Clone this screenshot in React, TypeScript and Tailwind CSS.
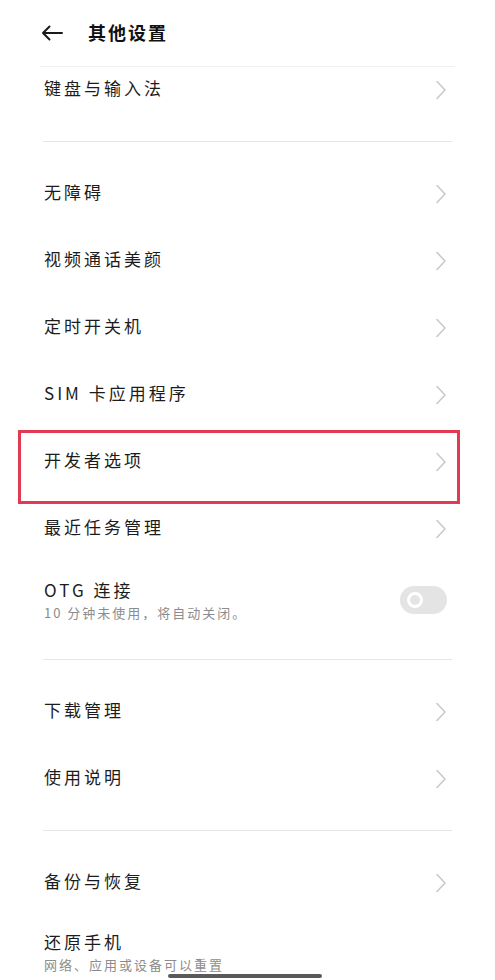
import React from 'react';

const font = { fontFamily: '"Noto Sans CJK SC", "Noto Sans", sans-serif' };

function Chevron() {
  return (
    <svg width="12" height="20" viewBox="0 0 12 20" fill="none" className="shrink-0">
      <path d="M2 1.5 L10 10 L2 18.5" stroke="#c9c9c9" strokeWidth="1.6" strokeLinecap="round" strokeLinejoin="round" />
    </svg>
  );
}

function Row({ label, highlight }: { label: string; highlight?: boolean }) {
  return (
    <div className="relative h-[67px] flex items-center justify-between pl-[44px] pr-[48px]">
      <span className="text-[17px] tracking-[3px] text-[#1c1c1c] pb-[4px]">{label}</span>
      <Chevron />
      {highlight && (
        <div className="absolute left-[18px] w-[442px] top-[2px] bottom-[-9px] border-[3px] border-[#e23a52]" />
      )}
    </div>
  );
}

function Divider() {
  return <div className="mx-[43px] h-px bg-[#e6e6e6]" />;
}

export default function App() {
  return (
    <div className="relative w-[495px] h-[980px] bg-white overflow-hidden" style={font}>
      {/* Header */}
      <div className="h-[66px] flex items-center pl-[41px]">
        <svg width="22" height="16" viewBox="0 0 22 16" fill="none">
          <path d="M21 8 H2 M8.5 1.5 L2 8 L8.5 14.5" stroke="#1a1a1a" strokeWidth="2" strokeLinecap="round" strokeLinejoin="round" />
        </svg>
        <span className="ml-[25px] text-[18px] font-bold tracking-[2px] text-[#111] pb-[2px]">其他设置</span>
      </div>
      <div className="mx-[40px] h-px bg-[#f0f0f0]" />

      <div className="h-[46px] flex items-center justify-between pl-[44px] pr-[48px]">
        <span className="text-[17px] tracking-[3px] text-[#1c1c1c] pb-[4px]">键盘与输入法</span>
        <Chevron />
      </div>
      <div className="h-[28px]" />
      <Divider />

      <div className="h-[18px]" />
      <Row label="无障碍" />
      <Row label="视频通话美颜" />
      <Row label="定时开关机" />
      <Row label="SIM 卡应用程序" />
      <Row label="开发者选项" highlight />
      <Row label="最近任务管理" />

      {/* OTG */}
      <div className="flex items-center justify-between pl-[44px] pr-[48px] pt-[16px] pb-[37px]">
        <div className="flex flex-col">
          <span className="text-[17px] leading-[24px] tracking-[3px] text-[#1c1c1c]">OTG 连接</span>
          <span className="text-[13px] leading-[18px] tracking-[2px] text-[#8c8c8c] mt-[2px]">10 分钟未使用，将自动关闭。</span>
        </div>
        <div className="w-[47px] h-[28px] rounded-full bg-[#e4e4e4] flex items-center pl-[7px]">
          <div className="w-[16px] h-[16px] rounded-full border-[3px] border-white bg-[#e4e4e4]" />
        </div>
      </div>
      <Divider />

      <div className="h-[18px]" />
      <Row label="下载管理" />
      <Row label="使用说明" />
      <div className="h-[18px]" />
      <Divider />

      <div className="h-[18px]" />
      <Row label="备份与恢复" />

      <div className="flex flex-col pl-[44px] pt-[14px]">
        <span className="text-[17px] leading-[24px] tracking-[3px] text-[#1c1c1c]">还原手机</span>
        <span className="text-[13px] leading-[18px] tracking-[2px] text-[#8c8c8c] mt-[2px]">网络、应用或设备可以重置</span>
      </div>

      {/* home indicator */}
      <div className="absolute left-[168px] top-[974px] w-[154px] h-[4px] rounded-full bg-[#5a5a5a]" />
    </div>
  );
}
